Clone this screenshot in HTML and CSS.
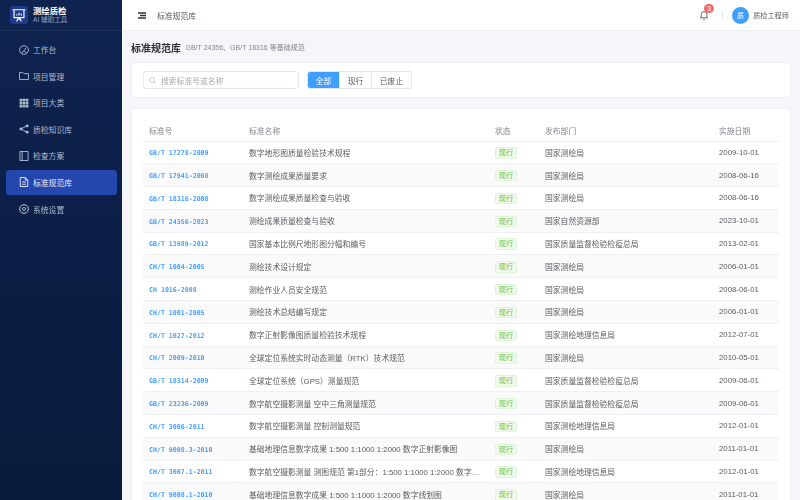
FILE: index.html
```html
<!DOCTYPE html>
<html lang="zh-CN">
<head>
    <meta charset="UTF-8">
    <title>标准规范库</title>
    <link rel="stylesheet" href="styles.css">
</head>
<body>
<div class="app">
    <aside class="side">
        <div class="brand">
            <span class="logo">
                <svg viewBox="0 0 24 24" width="14" height="14" fill="none" stroke="#fff" stroke-width="2"><path d="M1 3h22M3.500 3v13.500h17V3M12 16.500v2.500M8 23l2-4h4l2 4M8 13v-2.500M12 13V8M16 13v-3.500"/></svg>
            </span>
            <div>
                <div class="brand-name">测绘质检</div>
                <div class="brand-sub">AI 辅助工具</div>
            </div>
        </div>
        <nav class="menu">
            <a class="menu-item" href="#">
                <svg viewBox="0 0 16 16"><circle cx="8" cy="8" r="7"/><path d="M8 9l3-4.500M4.500 13l2-3h3l2 3"/></svg>
                工作台
            </a>
            <a class="menu-item" href="#">
                <svg viewBox="0 0 16 16"><path d="M.7 2.500h5.600l1.500 1.800h7.500v9.200H.7z"/></svg>
                项目管理
            </a>
            <a class="menu-item" href="#">
                <svg viewBox="0 0 16 16" class="solid"><path d="M1 1h4.200v4.200H1zM5.900 1h4.200v4.200H5.900zM10.800 1H15v4.200h-4.200zM1 5.900h4.200v4.200H1zM5.900 5.900h4.200v4.200H5.900zM10.800 5.900H15v4.200h-4.200zM1 10.800h4.200V15H1zM5.900 10.800h4.200V15H5.900zM10.800 10.800H15V15h-4.200z"/></svg>
                项目大类
            </a>
            <a class="menu-item" href="#">
                <svg viewBox="0 0 16 16"><path d="M3 8l9.500-5M3 8l9.500 5"/><circle class="dot" cx="3" cy="8" r="2.300"/><circle class="dot" cx="13" cy="3" r="2.300"/><circle class="dot" cx="13" cy="13" r="2.300"/></svg>
                质检知识库
            </a>
            <a class="menu-item" href="#">
                <svg viewBox="0 0 16 16"><path d="M1.500.8h13v14.400h-13zM5 .8v14.400"/></svg>
                检查方案
            </a>
            <a class="menu-item active" href="#">
                <svg viewBox="0 0 16 16"><path d="M2 .8h8l4 4v10.400H2zM10 .8v4h4M5 8h6M5 11.500h6"/></svg>
                标准规范库
            </a>
            <a class="menu-item" href="#">
                <svg viewBox="0 0 16 16"><circle cx="8" cy="8" r="2.400"/><path d="M6.400.8h3.200l.5 2.200 2-1.100 2.200 2.200-1.100 2 2.200.5v2.800l-2.200.5 1.100 2-2.200 2.200-2-1.100-.5 2.200H6.400l-.5-2.200-2 1.100-2.200-2.200 1.100-2-2.200-.5V6.600l2.200-.5-1.100-2 2.200-2.200 2 1.100z"/></svg>
                系统设置
            </a>
        </nav>
    </aside>

    <div class="main">
        <header class="top">
            <div class="top-left">
                <svg class="fold" viewBox="0 0 12 10" width="8" height="7"><path d="M0 0h12v2.400H0zM3 3.800h9v2.400H3zM0 7.600h12V10H0z"/></svg>
                <span class="crumb">标准规范库</span>
            </div>
            <div class="top-right">
                <span class="bell">
                    <svg viewBox="0 0 16 16" width="10" height="10" fill="none" stroke="#606266" stroke-width="1.500"><path d="M1.500 12.500h13M3.500 12.500V7a4.500 4.500 0 0 1 9 0v5.500M6.500 15h3"/></svg>
                    <span class="badge">3</span>
                </span>
                <span class="sep"></span>
                <span class="avatar">质</span>
                <span class="user">质检工程师</span>
            </div>
        </header>

        <main class="content">
            <div class="page-head">
                <h1>标准规范库</h1>
                <span>GB/T 24356、GB/T 18316 等基础规范</span>
            </div>

            <section class="card filter">
                <div class="search">
                    <svg viewBox="0 0 16 16" width="7" height="7" fill="none" stroke="#a8abb2" stroke-width="1.300"><circle cx="7" cy="7" r="6"/><path d="M11.500 11.500l3.500 3.500"/></svg>
                    <span>搜索标准号或名称</span>
                </div>
                <div class="tabs">
                    <span class="tab on">全部</span>
                    <span class="tab">现行</span>
                    <span class="tab last">已废止</span>
                </div>
            </section>

            <section class="card list">
                <table>
                    <colgroup>
                        <col class="c1"><col class="c2"><col class="c3"><col class="c4"><col>
                    </colgroup>
                    <thead>
                        <tr><th>标准号</th><th>标准名称</th><th>状态</th><th>发布部门</th><th>实施日期</th></tr>
                    </thead>
                    <tbody>
                        <tr><td class="code">GB/T 17278-2009</td><td>数字地形图质量检验技术规程</td><td><span class="tag">现行</span></td><td>国家测绘局</td><td>2009-10-01</td></tr>
                        <tr><td class="code">GB/T 17941-2008</td><td>数字测绘成果质量要求</td><td><span class="tag">现行</span></td><td>国家测绘局</td><td>2008-06-16</td></tr>
                        <tr><td class="code">GB/T 18316-2008</td><td>数字测绘成果质量检查与验收</td><td><span class="tag">现行</span></td><td>国家测绘局</td><td>2008-06-16</td></tr>
                        <tr><td class="code">GB/T 24356-2023</td><td>测绘成果质量检查与验收</td><td><span class="tag">现行</span></td><td>国家自然资源部</td><td>2023-10-01</td></tr>
                        <tr><td class="code">GB/T 13989-2012</td><td>国家基本比例尺地形图分幅和编号</td><td><span class="tag">现行</span></td><td>国家质量监督检验检疫总局</td><td>2013-02-01</td></tr>
                        <tr><td class="code">CH/T 1004-2005</td><td>测绘技术设计规定</td><td><span class="tag">现行</span></td><td>国家测绘局</td><td>2006-01-01</td></tr>
                        <tr><td class="code">CH 1016-2008</td><td>测绘作业人员安全规范</td><td><span class="tag">现行</span></td><td>国家测绘局</td><td>2008-06-01</td></tr>
                        <tr><td class="code">CH/T 1001-2005</td><td>测绘技术总结编写规定</td><td><span class="tag">现行</span></td><td>国家测绘局</td><td>2006-01-01</td></tr>
                        <tr><td class="code">CH/T 1027-2012</td><td>数字正射影像图质量检验技术规程</td><td><span class="tag">现行</span></td><td>国家测绘地理信息局</td><td>2012-07-01</td></tr>
                        <tr><td class="code">CH/T 2009-2010</td><td>全球定位系统实时动态测量（RTK）技术规范</td><td><span class="tag">现行</span></td><td>国家测绘局</td><td>2010-05-01</td></tr>
                        <tr><td class="code">GB/T 18314-2009</td><td>全球定位系统（GPS）测量规范</td><td><span class="tag">现行</span></td><td>国家质量监督检验检疫总局</td><td>2009-06-01</td></tr>
                        <tr><td class="code">GB/T 23236-2009</td><td>数字航空摄影测量 空中三角测量规范</td><td><span class="tag">现行</span></td><td>国家质量监督检验检疫总局</td><td>2009-06-01</td></tr>
                        <tr><td class="code">CH/T 3006-2011</td><td>数字航空摄影测量 控制测量规范</td><td><span class="tag">现行</span></td><td>国家测绘地理信息局</td><td>2012-01-01</td></tr>
                        <tr><td class="code">CH/T 9008.3-2010</td><td>基础地理信息数字成果 1:500 1:1000 1:2000 数字正射影像图</td><td><span class="tag">现行</span></td><td>国家测绘局</td><td>2011-01-01</td></tr>
                        <tr><td class="code">CH/T 3007.1-2011</td><td>数字航空摄影测量 测图规范 第1部分：1:500 1:1000 1:2000 数字线划图</td><td><span class="tag">现行</span></td><td>国家测绘地理信息局</td><td>2012-01-01</td></tr>
                        <tr><td class="code">CH/T 9008.1-2010</td><td>基础地理信息数字成果 1:500 1:1000 1:2000 数字线划图</td><td><span class="tag">现行</span></td><td>国家测绘局</td><td>2011-01-01</td></tr>
                    </tbody>
                </table>
            </section>
        </main>
    </div>
</div>
</body>
</html>
```
FILE: styles.css
```css
*{
    margin: 0;
    padding: 0;
    box-sizing: border-box;
}
html,body{
    height: 100%;
    overflow: hidden;
}
body{
    font-family: "Liberation Sans", "Noto Sans CJK SC", sans-serif;
    font-size: 7.8px;
    color: #5a5c61;
    background-color: #f4f6fa;
}
.app{
    display: flex;
    height: 500px;
    filter: blur(.25px);
}

/* sidebar */
.side{
    width: 122px;
    flex-shrink: 0;
    background: linear-gradient(180deg, #0f2350 0%, #0a1a3c 100%);
}
.brand{
    height: 31px;
    padding: 0 10px;
    display: flex;
    align-items: center;
    gap: 5px;
    border-bottom: 1px solid rgba(255,255,255,.06);
}
.logo{
    width: 18px;
    height: 18px;
    border-radius: 3px;
    background-color: #1e3a8a;
    display: flex;
    align-items: center;
    justify-content: center;
}
.brand-name{
    color: #fff;
    font-size: 8.4px;
    font-weight: bold;
    line-height: 10px;
}
.brand-sub{
    color: #8fa3c4;
    font-size: 6.6px;
    line-height: 8px;
}
.menu{
    padding: 6px 5.5px;
    display: flex;
    flex-direction: column;
    gap: 1.6px;
}
.menu-item{
    height: 25px;
    padding-left: 13px;
    border-radius: 3.6px;
    display: flex;
    align-items: center;
    gap: 4.5px;
    color: #aebbd3;
    text-decoration: none;
}
.menu-item svg{
    width: 10px;
    height: 10px;
    fill: none;
    stroke: currentColor;
    stroke-width: 1.5;
}
.menu-item svg.solid{
    fill: currentColor;
    stroke: none;
}
.menu-item .dot{
    fill: currentColor;
    stroke: none;
}
.menu-item.active{
    background-color: #2347ad;
    color: #e6ecf8;
}

/* top bar */
.main{
    flex: 1;
    min-width: 0;
    display: flex;
    flex-direction: column;
}
.top{
    height: 31px;
    flex-shrink: 0;
    padding: 0 11px 0 16px;
    background-color: #fff;
    border-bottom: 1px solid #eef0f5;
    display: flex;
    align-items: center;
    justify-content: space-between;
}
.top-left,.top-right{
    display: flex;
    align-items: center;
}
.fold{
    fill: #303133;
    margin-right: 11px;
}
.bell{
    position: relative;
    display: flex;
    margin-right: 13px;
}
.badge{
    position: absolute;
    left: 5px;
    top: -6px;
    width: 10px;
    height: 9px;
    border-radius: 5px;
    background-color: #f56c6c;
    color: #fff;
    font-size: 6.5px;
    line-height: 9px;
    text-align: center;
}
.sep{
    width: 1px;
    height: 8px;
    background-color: #e4e7ed;
    margin-right: 9px;
}
.avatar{
    width: 17px;
    height: 17px;
    border-radius: 50%;
    background-color: #409eff;
    color: #fff;
    font-size: 7px;
    display: flex;
    align-items: center;
    justify-content: center;
    margin-right: 4px;
}
.user{
    font-size: 7.2px;
}

/* content */
.content{
    flex: 1;
    min-height: 0;
    padding: 9px 9px 0 9px;
    overflow: hidden;
}
.page-head{
    height: 14px;
    margin-bottom: 8px;
    display: flex;
    align-items: center;
    gap: 4.5px;
}
.page-head h1{
    font-size: 10px;
    font-weight: bold;
    color: #303133;
}
.page-head span{
    font-size: 7px;
    color: #85878c;
}
.card{
    background-color: #fff;
    border: 1px solid #eff1f5;
    border-radius: 4px;
}
.filter{
    height: 36px;
    margin-bottom: 10px;
    padding: 0 11px;
    display: flex;
    align-items: center;
    gap: 8.5px;
}
.search{
    width: 155.5px;
    height: 18px;
    padding: 0 5px;
    border: 1px solid #e4e7ed;
    border-radius: 3px;
    display: flex;
    align-items: center;
    gap: 5px;
    color: #a8abb2;
}
.tabs{
    height: 18px;
    display: flex;
    border: 1px solid #e4e7ed;
    border-radius: 3px;
}
.tab{
    width: 32px;
    display: flex;
    align-items: center;
    justify-content: center;
    border-right: 1px solid #e4e7ed;
}
.tab.last{
    width: 39px;
    border-right: none;
}
.tab.on{
    background-color: #409eff;
    color: #fff;
    border-radius: 2px 0 0 2px;
}
.list{
    padding: 11px 11px 0 11px;
    height: 500px;
}
table{
    width: 636px;
    table-layout: fixed;
    border-collapse: collapse;
}
.c1{ width: 100px; }
.c2{ width: 246px; }
.c3{ width: 50px; }
.c4{ width: 174px; }
th,td{
    padding: 0 6px;
    text-align: left;
    white-space: nowrap;
    overflow: hidden;
    text-overflow: ellipsis;
    border-bottom: 1px solid #eef0f5;
}
th{
    height: 21px;
    font-weight: normal;
    color: #85878c;
}
td{
    height: 22.8px;
}
tbody tr:nth-child(even){
    background-color: #fafafa;
}
td.code{
    padding-top: 1.5px;
    font-family: "DejaVu Sans Mono", monospace;
    font-size: 6.6px;
    font-weight: bold;
    color: #409eff;
}
.tag{
    display: inline-block;
    width: 22px;
    height: 11.5px;
    margin-top: 1px;
    line-height: 10.5px;
    text-align: center;
    font-size: 7.2px;
    color: #67c23a;
    background-color: #f0f9eb;
    border: 1px solid #e1f3d8;
    border-radius: 2px;
    vertical-align: middle;
}
```
